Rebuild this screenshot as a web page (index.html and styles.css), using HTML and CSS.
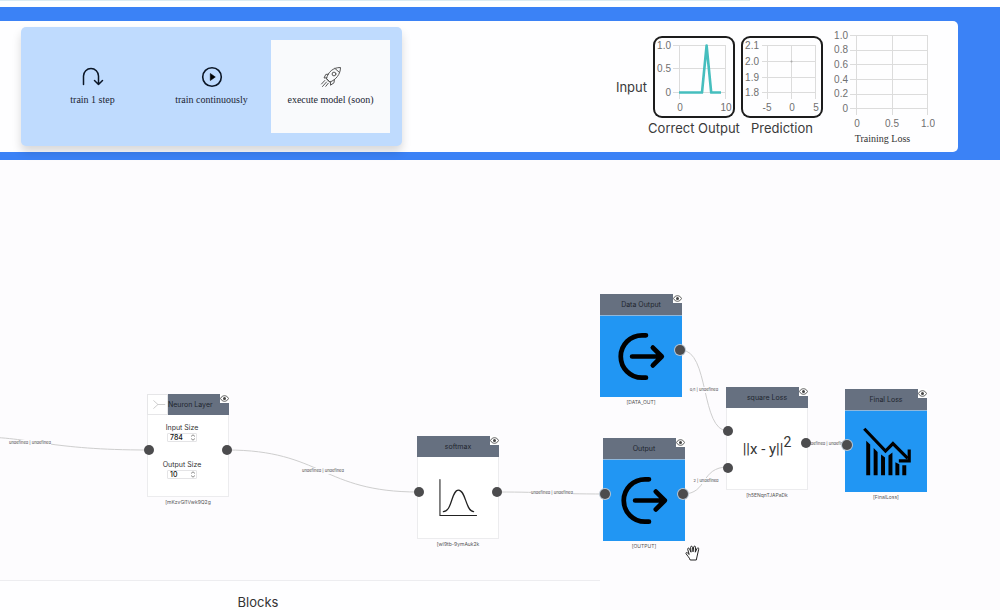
FILE: index.html
```
<!DOCTYPE html>
<html lang="en">
<head>
<meta charset="utf-8">
<title>Network editor</title>
<link rel="stylesheet" href="styles.css">
</head>
<body>
<svg class="defs" width="0" height="0" aria-hidden="true">
  <symbol id="eye" viewBox="0 0 9 9">
    <path d="M.4 4.500C2.400 .8 6.600 .8 8.600 4.500 6.600 8.200 2.400 8.200.4 4.500Z" fill="#fff" stroke="#444" stroke-width=".9"/>
    <circle cx="4.500" cy="4.500" r="1.500" fill="#444"/>
  </symbol>
  <symbol id="exit" viewBox="0 0 82 82">
    <path d="M46 19.500H42a21.500 21.500 0 0 0 0 43H46M32 41H61M53 32l9 9-9 9" fill="none" stroke="#000" stroke-width="4.800" stroke-linecap="round" stroke-linejoin="round"/>
  </symbol>
  <symbol id="spin" viewBox="0 0 6 8">
    <path d="M.8 2.800 3 .9l2.200 1.900M.8 5.200 3 7.100l2.200-1.900" fill="none" stroke="#555" stroke-width=".8"/>
  </symbol>
</svg>
<div class="app">
  <div class="loading"><div class="loading-bar"></div></div>
  <header class="header">
    <div class="card">
      <div class="actions">
        <button class="action" type="button">
          <svg width="22" height="22" viewBox="0 0 22 22" fill="none" stroke="#0b1626" stroke-width="1.500" stroke-linecap="round" stroke-linejoin="round"><path d="M1.500 18.500V10a7.500 7.500 0 0 1 15 0v8.500M12.500 14.500l4 4 4-4"/></svg>
          <span>train 1 step</span>
        </button>
        <button class="action" type="button">
          <svg width="22" height="22" viewBox="0 0 22 22"><circle cx="11" cy="11" r="9.300" fill="none" stroke="#0b1626" stroke-width="1.600"/><path d="M9.300 7.500v7l5-3.500z" fill="#000" stroke="#000" stroke-width=".6" stroke-linejoin="round"/></svg>
          <span>train continuously</span>
        </button>
        <button class="action action-soon" type="button">
          <svg width="22" height="22" viewBox="0 0 22 22" fill="none" stroke="#555" stroke-width="1" stroke-linecap="round" stroke-linejoin="round"><path d="M6.500 12.500C8 6 13 1.500 20.500 1.500 20.500 8 16 14 10 16ZM6.500 12.500 10 16M8.500 8.200 5.800 8.400 4 12l2.800-.2M14.400 13.500l-.4 3.300-3.500 2.400.1-3.300M15 2.500l4.500 4M4.800 14.500 1.500 18M6.500 16 2.500 20.500M8.200 17.300 5.800 20.300"/><circle cx="14" cy="8" r="1.900"/></svg>
          <span>execute model (soon)</span>
        </button>
      </div>
      <div class="monitor">
        <span class="label">Input</span>
        <figure class="plot wide">
          <svg class="framed" viewBox="0 0 82 82" role="img" aria-label="Correct output chart">
            <path class="grid" d="M20 9.500H73M20 32.500H73M20 56.500H73M26.500 9V63M72.500 9V63"/>
            <path d="M26 56.500H49L53.600 9.500 58.200 56.500H68" fill="none" stroke="#46bebe" stroke-width="2.600" stroke-linejoin="round"/>
            <g class="ticks"><g text-anchor="end"><text x="18" y="13">1.0</text><text x="18" y="36">0.5</text><text x="18" y="60">0</text></g><g text-anchor="middle"><text x="27" y="75">0</text><text x="73" y="75">10</text></g></g>
          </svg>
          <figcaption class="label">Correct Output</figcaption>
        </figure>
        <figure class="plot">
          <svg class="framed" viewBox="0 0 82 82" role="img" aria-label="Prediction chart">
            <path class="grid" d="M21 9.500H75M21 25.500H75M21 41.500H75M21 56.500H75M26.500 9V63M50.500 9V63M74.500 9V63"/>
            <circle cx="50.500" cy="25.500" r="1" fill="#aaa"/>
            <g class="ticks"><g text-anchor="end"><text x="18" y="13">2.1</text><text x="18" y="29">2.0</text><text x="18" y="45">1.9</text><text x="18" y="60">1.8</text></g><g text-anchor="middle"><text x="26" y="75">-5</text><text x="51" y="75">0</text><text x="75" y="75">5</text></g></g>
          </svg>
          <figcaption class="label">Prediction</figcaption>
        </figure>
        <figure class="plot loss">
          <svg width="105" height="104" viewBox="0 0 105 104" role="img" aria-label="Training loss chart">
            <path class="grid" d="M20 6.500H98M20 21.500H98M20 35.500H98M20 50.500H98M20 65.500H98M20 79.500H98M26.500 6V86M62.500 6V86M97.500 6V86"/>
            <g class="ticks"><g text-anchor="end"><text x="18" y="10">1.0</text><text x="18" y="24">0.8</text><text x="18" y="39">0.6</text><text x="18" y="54">0.4</text><text x="18" y="68">0.2</text><text x="18" y="83">0</text></g><g text-anchor="middle"><text x="27" y="98">0</text><text x="62" y="98">0.5</text><text x="98" y="98">1.0</text></g></g>
          </svg>
          <figcaption>Training Loss</figcaption>
        </figure>
      </div>
    </div>
  </header>

  <main class="canvas">
    <svg class="edges" aria-hidden="true">
      <path d="M-20 277C30 277 50 290 148 290M227 290C322 290 322 332 418 332M497 332C550 332 550 334 605 334M681 190C710 190 700 271 728 271M683 334C708 334 700 307 728 307M807 283H847"/>
    </svg>
    <span class="edge-label e1">undefined | undefined</span>
    <span class="edge-label e2">undefined | undefined</span>
    <span class="edge-label e3">undefined | undefined</span>
    <span class="edge-label e4">0/1 | undefined</span>
    <span class="edge-label e5">2 | undefined</span>
    <span class="edge-label e6">undefined | undefined</span>

    <section class="node neuron">
      <div class="node-head"><svg class="grip" viewBox="0 0 21 21"><path d="M6 6l5 4.500L6 15M11 10.500h8" fill="none" stroke="#bbb" stroke-width=".8"/></svg><span>Neuron Layer</span></div>
      <svg class="eye"><use href="#eye"/></svg>
      <div class="node-body fields">
        <div class="field"><label for="in-size">Input Size</label><div class="number"><input id="in-size" type="number" value="784"><svg><use href="#spin"/></svg></div></div>
        <div class="field"><label for="out-size">Output Size</label><div class="number"><input id="out-size" type="number" value="10"><svg><use href="#spin"/></svg></div></div>
      </div>
      <div class="node-id">[mKzvGl1Vwk9Q2g</div>
      <i class="port left mid"></i><i class="port right mid"></i>
    </section>

    <section class="node softmax">
      <div class="node-head"><span>softmax</span></div>
      <svg class="eye"><use href="#eye"/></svg>
      <div class="node-body"><svg viewBox="0 0 82 82" fill="none" stroke="#222" stroke-linecap="round"><path d="M22.500 22.500V59.500H60" stroke-width="1.100"/><path d="M26 55.500C35 55.500 34 33.500 41.500 33.500S49 55.500 57 55.500" stroke-width="1.300"/></svg></div>
      <div class="node-id">[wI9tb-9ymAuk2k</div>
      <i class="port left mid"></i><i class="port right mid"></i>
    </section>

    <section class="node solid data-output">
      <div class="node-head"><span>Data Output</span></div>
      <svg class="eye"><use href="#eye"/></svg>
      <div class="node-body"><svg viewBox="0 0 82 82"><use href="#exit"/></svg></div>
      <div class="node-id">[DATA_OUT]</div>
      <i class="port right mid"></i>
    </section>

    <section class="node solid output">
      <div class="node-head"><span>Output</span></div>
      <svg class="eye"><use href="#eye"/></svg>
      <div class="node-body"><svg viewBox="0 0 82 82"><use href="#exit"/></svg></div>
      <div class="node-id">[OUTPUT]</div>
      <i class="port left mid"></i><i class="port right mid"></i>
    </section>

    <section class="node square-loss">
      <div class="node-head"><span>square Loss</span></div>
      <svg class="eye"><use href="#eye"/></svg>
      <div class="node-body formula"><span>||x - y||<sup>2</sup></span></div>
      <div class="node-id">[h5ENqnTJAPaDk</div>
      <i class="port left upper"></i><i class="port left lower"></i><i class="port right mid"></i>
    </section>

    <section class="node solid final-loss">
      <div class="node-head"><span>Final Loss</span></div>
      <svg class="eye"><use href="#eye"/></svg>
      <div class="node-body"><svg viewBox="0 0 82 82"><path d="M19 18 40.500 40.500 48 33 63 48" fill="none" stroke="#000" stroke-width="3.200"/><path d="M54 50.500H64.500V39" fill="none" stroke="#000" stroke-width="3.200"/><path d="M21 30l4 4V65H21ZM28.500 37.500l4 4V65H28.500ZM36 44l4 3V65H36ZM43.500 45l4-3V65H43.500ZM50.500 52l4 2V65H50.500ZM57.500 55H61.500V65H57.500Z"/></svg></div>
      <div class="node-id">[FinalLoss]</div>
      <i class="port left mid"></i>
    </section>

    <svg class="hand" viewBox="0 0 16 16"><path d="M5.200 15C4.300 12.500 2.200 10.500 1 8.600.6 7.600 1.800 7.100 2.600 8L4.200 9.500 2.700 4.300c-.3-1.300 1.300-1.700 1.800-.5L6 7.200 5.600 2.300c0-1.400 1.700-1.400 1.900 0L8 6.800 8.700 2c.2-1.300 1.900-1.100 1.800.2L10.300 7.200l1.700-3.700c.6-1.200 2.100-.6 1.700.7L12.600 9c-.2 2.300-1.100 3.600-1.300 6Z" fill="#fff" stroke="#222" stroke-width="1" stroke-linejoin="round"/></svg>

    <aside class="blocks"><h2>Blocks</h2></aside>
  </main>
</div>
</body>
</html>
```
FILE: styles.css
```
* { box-sizing: border-box; }
body { margin: 0; font-family: Inter, "Liberation Sans", sans-serif; color: #333; }
.defs { position: absolute; }
.app { display: flex; flex-direction: column; min-height: 100vh; overflow: hidden; background: #fdfcfe; }

.loading { height: 7px; background: #fff; }
.loading-bar { width: 75%; height: 1px; background: #dcebf2; }

.header { padding: 14px 42px 8px 0; background: #3b82f6; }
.card { display: flex; align-items: center; justify-content: space-between; padding: 6px 23px 6px 21px; background: #fefeff; border-radius: 0 5px 5px 0; }

.actions { display: grid; grid-template-columns: repeat(3, 119px); padding: 13px 12px; background: #bfdbfe; border-radius: 5px; box-shadow: 0 6px 10px rgba(0, 0, 0, .15); }
.action { display: flex; flex-direction: column; align-items: center; justify-content: center; gap: 6px; height: 93px; padding: 0 0 2px; border: 0; background: none; color: #1b2433; font: 10px/12px "Liberation Serif", serif; }
.action-soon { background: #f9fafc; }

.monitor { display: flex; align-items: center; }
.label { font-size: 13px; line-height: 18px; color: #3a3a3a; }
.plot { display: flex; flex-direction: column; align-items: center; margin: 0; }
.plot .label { padding-top: 1px; }
.wide { width: 94px; }
.framed { width: 82px; height: 82px; border-radius: 9px; box-shadow: inset 0 0 0 2px #1c1c1c; }
.grid { fill: none; stroke: #dcdcdc; stroke-width: 1; }
.ticks { font: 10px "Liberation Sans", sans-serif; fill: #707070; }
.loss { padding-left: 7px; font: 10px/12px "Liberation Serif", serif; }

.canvas { position: relative; flex: 1; min-height: 449px; }
.edges { position: absolute; inset: 0; width: 100%; height: 100%; fill: none; stroke: #cecece; stroke-width: 1; }
.edge-label { position: absolute; transform: translate(-50%, -50%); background: #fdfcfe; font-size: 4px; line-height: 6px; white-space: nowrap; color: #444; }
.e1 { left: 30px; top: 283px; }
.e2 { left: 323px; top: 311px; }
.e3 { left: 552px; top: 333px; }
.e4 { left: 704px; top: 230px; }
.e5 { left: 706px; top: 321px; }
.e6 { left: 827px; top: 284px; }

.node { position: absolute; width: 82px; }
.neuron { left: 147px; top: 234px; }
.softmax { left: 417px; top: 276px; }
.data-output { left: 600px; top: 134px; }
.output { left: 603px; top: 278px; }
.square-loss { left: 726px; top: 227px; }
.final-loss { left: 845px; top: 229px; }

.node-head { display: flex; align-items: center; justify-content: center; height: 21px; background: #667080; color: #20252e; font-size: 7px; }
.grip { width: 21px; height: 21px; background: #fff; border: 1px solid #e6e6e8; }
.neuron .node-head { justify-content: flex-start; }
.node-body { height: 82px; background: #fff; border: 1px solid #ececee; border-top: 0; }
.node-body > svg { display: block; width: 100%; height: 100%; }
.solid .node-body { background: #2196f3; border: 0; border-top: 1px solid #8fb8dc; }
.node-id { padding-top: 2px; font-size: 5px; line-height: 6px; text-align: center; color: #555; }
.eye { position: absolute; top: 0; right: 0; width: 9px; height: 9px; background: #fff; }

.port { position: absolute; width: 10px; height: 10px; border-radius: 50%; background: #4c4c4e; }
.solid .port { box-shadow: 0 0 0 1px #b9c4cf; }
.left { left: -3px; }
.right { right: -3px; }
.mid { top: 51px; }
.upper { top: 39px; }
.lower { top: 76px; }

.fields { display: flex; flex-direction: column; gap: 18px; padding: 8px 20px 0 8px; }
.field { display: flex; flex-direction: column; align-items: center; font-size: 7px; line-height: 10px; white-space: nowrap; }
.number { position: relative; width: 30px; height: 9px; }
.number input { display: block; width: 100%; height: 100%; padding: 0 2px; border: 1px solid #e4e4e6; border-radius: 1px; background: #fff; font: 500 7px/7px Inter, sans-serif; color: #111; appearance: textfield; }
.number input::-webkit-inner-spin-button { appearance: none; }
.number svg { position: absolute; top: 1px; right: 1px; width: 6px; height: 7px; }

.formula { display: flex; align-items: center; justify-content: center; font: 15px/18px Roboto, sans-serif; color: #333; }
.formula sup { font-size: 14px; line-height: 0; vertical-align: 7px; }

.hand { position: absolute; left: 685px; top: 385px; width: 16px; height: 16px; }

.blocks { position: absolute; left: 0; bottom: 0; width: 60%; height: 30px; padding: 14px 84px 0 0; background: #fefeff; border-top: 1px solid #ededf0; }
.blocks h2 { margin: 0; font-size: 13px; font-weight: 400; line-height: 15px; text-align: center; }
```
